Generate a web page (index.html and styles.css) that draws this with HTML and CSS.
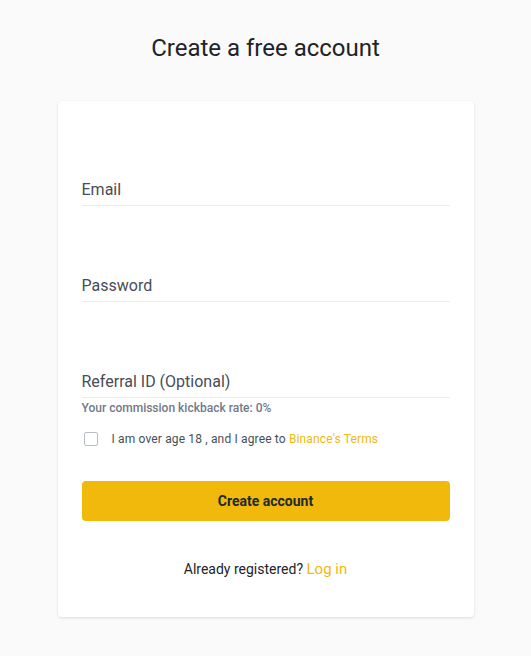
FILE: index.html
```html
<!DOCTYPE html>
<html lang="en">
<head>
    <meta charset="UTF-8">
    <meta name="viewport" content="width=device-width, initial-scale=1.0">
    <title>Create a free account</title>
    <link rel="stylesheet" href="styles.css">
</head>
<body>
    <h1 class="page-title">Create a free account</h1>

    <div class="card">
        <form class="signup-form">
            <div class="field">
                <input type="email" class="field-input" placeholder="Email">
            </div>
            <div class="field">
                <input type="password" class="field-input" placeholder="Password">
            </div>
            <div class="field">
                <input type="text" class="field-input" placeholder="Referral ID (Optional)">
            </div>
            <div class="kickback">Your commission kickback rate: 0%</div>

            <label class="agree">
                <span class="agree-box"></span>
                <span>I am over age 18 , and I agree to <a href="#" class="link">Binance's Terms</a></span>
            </label>

            <button type="submit" class="submit-btn">Create account</button>
        </form>

        <div class="login-line">Already registered? <a href="#" class="link">Log in</a></div>
    </div>
</body>
</html>
```

FILE: styles.css
```css
body {
    font-family: Roboto, "Liberation Sans", sans-serif;
    margin: 0;
    padding: 32px 0 39px;
    background-color: #fafafa;
    color: #1e2329;
}

.page-title {
    margin: 0;
    font-size: 24px;
    line-height: 32px;
    font-weight: 400;
    text-align: center;
    color: #1e2329;
}

.card {
    width: 416px;
    margin: 37px auto 0;
    padding: 72px 24px 38px;
    box-sizing: border-box;
    background-color: #fff;
    border-radius: 4px;
    box-shadow: 0 1px 3px rgba(0, 0, 0, 0.12);
}

.signup-form {
    display: flex;
    flex-direction: column;
}

.field + .field {
    margin-top: 63px;
}

.field-input {
    display: block;
    width: 100%;
    height: 33px;
    padding: 0;
    border: none;
    border-bottom: 1px solid #eaecef;
    outline: none;
    font-family: inherit;
    font-size: 16px;
    color: #1e2329;
    background: transparent;
    box-sizing: border-box;
}

.field-input::placeholder {
    color: #474d57;
}

.kickback {
    margin-top: 2px;
    font-size: 12px;
    line-height: 16px;
    font-weight: 500;
    color: #707a8a;
}

.agree {
    display: flex;
    align-items: center;
    gap: 14px;
    height: 20px;
    margin-top: 13px;
    padding-left: 2px;
    font-size: 12px;
    letter-spacing: 0.15px;
    color: #474d57;
    cursor: pointer;
}

.agree-box {
    width: 14px;
    height: 14px;
    border: 1px solid #b7bdc6;
    border-radius: 2px;
    box-sizing: border-box;
}

.link {
    color: #f0b90b;
    text-decoration: none;
}

.submit-btn {
    height: 40px;
    margin-top: 32px;
    border: none;
    border-radius: 4px;
    background-color: #f0b90b;
    color: #212833;
    font-family: inherit;
    font-size: 14px;
    font-weight: 700;
    cursor: pointer;
}

.login-line {
    margin-top: 38px;
    font-size: 14px;
    line-height: 20px;
    text-align: center;
    color: #1e2329;
}

.login-line .link {
    font-size: 15px;
}
```
